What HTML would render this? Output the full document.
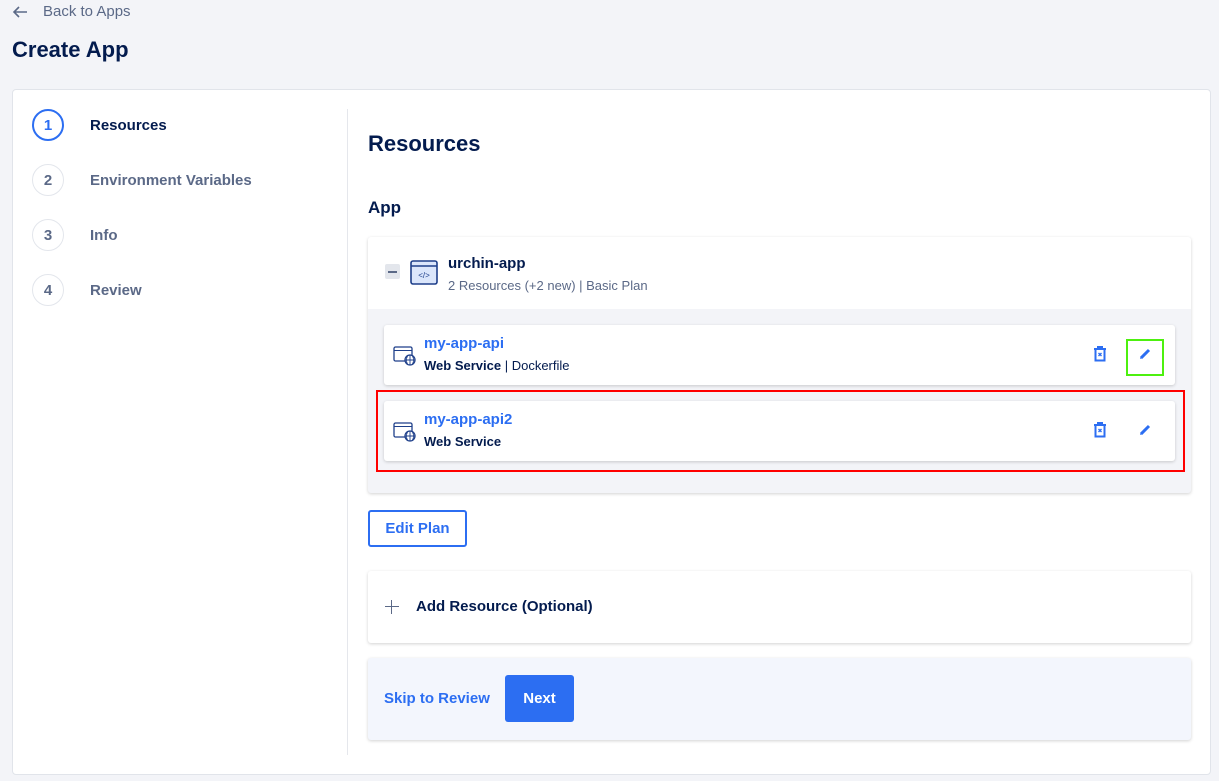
<!DOCTYPE html>
<html><head><style>
*{box-sizing:border-box;margin:0;padding:0}
body{width:1219px;height:781px;background:#f3f4f8;font-family:"Liberation Sans",sans-serif;position:relative;overflow:hidden;color:#031b4e}
.a{position:absolute}
.back{left:43px;top:3px;font-size:15px;color:#5b6987}
h1{position:absolute;left:12px;top:37px;font-size:22px;font-weight:bold;color:#031b4e}
.card{left:12px;top:89px;width:1199px;height:686px;background:#fff;border:1px solid #e1e4ea;border-radius:4px}
.div{left:347px;top:109px;width:1px;height:646px;background:#e5e7ec}
.step{position:absolute;left:32px;width:32px;height:32px;border-radius:50%;border:1px solid #e3e6ec;display:flex;align-items:center;justify-content:center;font-size:15px;font-weight:bold;color:#5b6987}
.sl{position:absolute;left:90px;font-size:15px;font-weight:bold;color:#5b6987}
.sh{box-shadow:0 1px 3px rgba(0,0,0,.18);border-radius:3px;background:#fff}
.svc{left:384px;width:791px;height:60px}
.nm{position:absolute;left:40px;top:10px;font-size:15px;font-weight:bold;color:#2c6ef2}
.sub{position:absolute;left:40px;top:33px;font-size:13px;color:#031b4e}
</style></head><body>
<svg class="a" style="left:12px;top:5px" width="16" height="14" viewBox="0 0 16 14"><path d="M15 7H2M7 2L2 7l5 5" stroke="#5b6987" stroke-width="1.6" fill="none"/></svg>
<div class="a back">Back to Apps</div>
<h1>Create App</h1>
<div class="a card"></div>
<div class="a div"></div>
<div class="step" style="top:109px;border:2px solid #2c6ef2;color:#2c6ef2">1</div><div class="sl" style="top:117px;color:#031b4e">Resources</div>
<div class="step" style="top:164px">2</div><div class="sl" style="top:172px">Environment Variables</div>
<div class="step" style="top:219px">3</div><div class="sl" style="top:227px">Info</div>
<div class="step" style="top:274px">4</div><div class="sl" style="top:282px">Review</div>

<div class="a" style="left:368px;top:131px;font-size:22px;font-weight:bold">Resources</div>
<div class="a" style="left:368px;top:198px;font-size:17px;font-weight:bold">App</div>

<div class="a sh" style="left:368px;top:237px;width:823px;height:256px;background:#f3f4f8;overflow:hidden">
<div style="height:72px;background:#fff;position:relative">
<div class="a" style="left:17px;top:27px;width:15px;height:15px;background:#e3e6ec;border-radius:2px"><div style="margin:7px 3px;height:1.5px;background:#5b6987"></div></div>
<svg class="a" style="left:42px;top:23px" width="28" height="25" viewBox="0 0 28 25"><rect x="1" y="1" width="26" height="23" rx="2" fill="#dbe6fb" stroke="#1e3f8a" stroke-width="1.6"/><line x1="1" y1="6" x2="27" y2="6" stroke="#1e3f8a" stroke-width="1.4"/><text x="14" y="18" font-size="8" text-anchor="middle" fill="#1e3f8a" font-family="Liberation Sans">&lt;/&gt;</text></svg>
<div class="a" style="left:80px;top:18px;font-size:15px;font-weight:bold">urchin-app</div>
<div class="a" style="left:80px;top:41px;font-size:13px;color:#5b6987">2 Resources (+2 new) | Basic Plan</div>
</div></div>

<div class="a sh svc" style="top:325px"><svg class="a" style="left:9px;top:21px" width="24" height="20" viewBox="0 0 24 20"><rect x="1" y="1" width="18" height="14" rx="1.5" fill="#fff" stroke="#1e3f8a" stroke-width="1.3"/><line x1="1" y1="4.5" x2="19" y2="4.5" stroke="#1e3f8a"/><circle cx="17" cy="14" r="5" fill="#fff" stroke="#1e3f8a" stroke-width="1.3"/><path d="M12 14h10M17 9v10M14.5 10c-1.5 3-1.5 5 0 8M19.5 10c1.5 3 1.5 5 0 8" stroke="#1e3f8a" fill="none" stroke-width=".9"/></svg><div class="nm">my-app-api</div><div class="sub"><b>Web Service</b> | Dockerfile</div>
<svg class="a" style="left:709px;top:21px" width="14" height="16" viewBox="0 0 14 16"><path d="M1 3h12M5 3V1h4v2M2.5 3.5v11h9v-11" stroke="#2c6ef2" stroke-width="2" fill="none"/><path d="M5.5 7l3 3M8.5 7l-3 3" stroke="#2c6ef2" stroke-width="1.4"/></svg>
<svg class="a" style="left:755px;top:23px" width="12" height="12" viewBox="0 0 12 12"><path d="M2 10L10 2" stroke="#2c6ef2" stroke-width="3"/><path d="M1 11l1-3 2 2z" fill="#2c6ef2"/></svg></div>
<div class="a" style="left:1126px;top:339px;width:38px;height:37px;border:2px solid #4df00f"></div>

<div class="a sh svc" style="top:401px"><svg class="a" style="left:9px;top:21px" width="24" height="20" viewBox="0 0 24 20"><rect x="1" y="1" width="18" height="14" rx="1.5" fill="#fff" stroke="#1e3f8a" stroke-width="1.3"/><line x1="1" y1="4.5" x2="19" y2="4.5" stroke="#1e3f8a"/><circle cx="17" cy="14" r="5" fill="#fff" stroke="#1e3f8a" stroke-width="1.3"/><path d="M12 14h10M17 9v10M14.5 10c-1.5 3-1.5 5 0 8M19.5 10c1.5 3 1.5 5 0 8" stroke="#1e3f8a" fill="none" stroke-width=".9"/></svg><div class="nm">my-app-api2</div><div class="sub"><b>Web Service</b></div>
<svg class="a" style="left:709px;top:21px" width="14" height="16" viewBox="0 0 14 16"><path d="M1 3h12M5 3V1h4v2M2.5 3.5v11h9v-11" stroke="#2c6ef2" stroke-width="2" fill="none"/><path d="M5.5 7l3 3M8.5 7l-3 3" stroke="#2c6ef2" stroke-width="1.4"/></svg>
<svg class="a" style="left:755px;top:23px" width="12" height="12" viewBox="0 0 12 12"><path d="M2 10L10 2" stroke="#2c6ef2" stroke-width="3"/><path d="M1 11l1-3 2 2z" fill="#2c6ef2"/></svg></div>
<div class="a" style="left:376px;top:390px;width:809px;height:82px;border:2px solid #f00"></div>

<div class="a" style="left:368px;top:510px;width:99px;height:37px;border:2px solid #2c6ef2;border-radius:3px;color:#2c6ef2;font-weight:bold;font-size:15px;text-align:center;line-height:33px">Edit Plan</div>

<div class="a sh" style="left:368px;top:571px;width:823px;height:72px">
<div class="a" style="left:17px;top:29px;width:14px;height:14px"><div class="a" style="left:0;top:6px;width:14px;height:1.4px;background:#5b6987"></div><div class="a" style="left:6px;top:0;width:1.4px;height:14px;background:#5b6987"></div></div>
<div class="a" style="left:48px;top:27px;font-size:15px;font-weight:bold">Add Resource (Optional)</div></div>

<div class="a sh" style="left:368px;top:658px;width:823px;height:82px;background:#f3f6fd">
<div class="a" style="left:16px;top:32px;font-size:15px;font-weight:bold;color:#2c6ef2">Skip to Review</div>
<div class="a" style="left:137px;top:17px;width:69px;height:47px;background:#2c6ef2;border-radius:3px;color:#fff;font-weight:bold;font-size:15px;text-align:center;line-height:47px">Next</div></div>
</body></html>
